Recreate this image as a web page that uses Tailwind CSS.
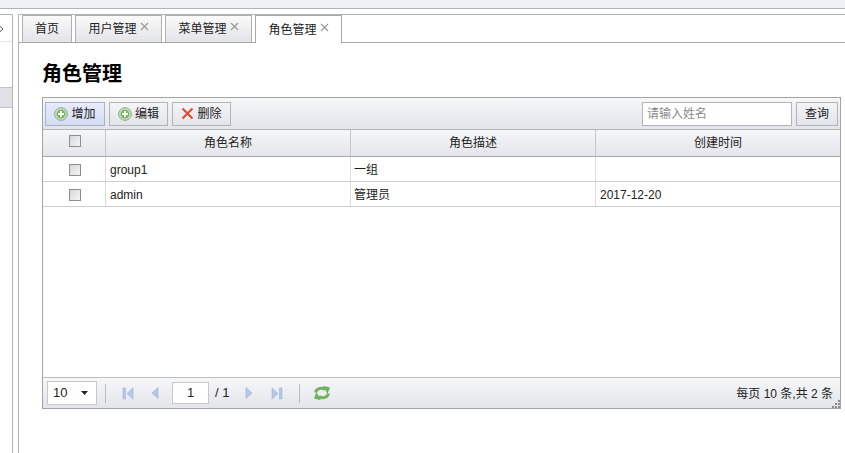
<!DOCTYPE html>
<html lang="zh-CN">
<head>
  <meta charset="UTF-8" />
  <title>角色管理</title>
  <script src="https://cdn.jsdelivr.net/npm/@tailwindcss/browser@4"></script>
</head>
<body class="bg-white overflow-hidden font-['Liberation_Sans','Noto_Sans_CJK_SC',sans-serif] text-xs text-[#222]">
<div class="w-[845px] h-[453px] flex flex-col">
  <!-- top bar -->
  <div class="h-[9px] shrink-0 bg-[#eef1f6] border-b border-[#b4b4b4]"></div>

  <div class="flex flex-1 pt-[5px] min-h-0">
    <!-- collapsed side menu -->
    <div class="w-[13px] shrink-0 border-t border-r border-[#b4b4b4] flex flex-col">
      <div class="h-[27px] flex items-center border-b border-[#e4e4e4] overflow-hidden">
        <svg width="11" height="11" viewBox="0 0 11 11" class="-ml-[7px] shrink-0"><path d="M2 2.500 6 6 2 9.500M6 2.500 10 6 6 9.500" fill="none" stroke="#555" stroke-width="1"/></svg>
      </div>
      <div class="mt-[45px] h-[21px] bg-[#dfe1e6] border-y border-[#c4c4c4]"></div>
    </div>

    <!-- main -->
    <div class="ml-[5px] flex-1 border-t border-l border-[#b4b4b4] flex flex-col min-w-0">
      <!-- tabs -->
      <div class="h-[28px] shrink-0 border-b border-[#a8a8a8] flex items-start pl-[3px] gap-[3px]">
        <div class="w-[50px] h-[27px] bg-gradient-to-b from-[#fafafa] to-[#e3e4e8] border border-b-0 border-[#b0b0b0] flex items-center justify-center">首页</div>
        <div class="w-[87px] h-[27px] bg-gradient-to-b from-[#fafafa] to-[#e3e4e8] border border-b-0 border-[#b0b0b0] flex items-center justify-center gap-[3px]"><span>用户管理</span><svg width="9" height="9" viewBox="0 0 9 9" class="-mt-[5px]"><path d="M1 1 8 8M8 1 1 8" stroke="#999" stroke-width="1.2"/></svg></div>
        <div class="w-[87px] h-[27px] bg-gradient-to-b from-[#fafafa] to-[#e3e4e8] border border-b-0 border-[#b0b0b0] flex items-center justify-center gap-[3px]"><span>菜单管理</span><svg width="9" height="9" viewBox="0 0 9 9" class="-mt-[5px]"><path d="M1 1 8 8M8 1 1 8" stroke="#999" stroke-width="1.2"/></svg></div>
        <div class="w-[87px] h-[28px] bg-white border border-b-0 border-[#a8a8a8] flex items-center justify-center gap-[3px] relative z-10"><span>角色管理</span><svg width="9" height="9" viewBox="0 0 9 9" class="-mt-[5px]"><path d="M1 1 8 8M8 1 1 8" stroke="#999" stroke-width="1.2"/></svg></div>
      </div>

      <div class="flex-1 flex flex-col pl-[23px] pr-[4px] pb-[44px] min-h-0">
        <h1 class="h-[54px] shrink-0 flex items-center text-xl font-bold text-black leading-none pt-[7px]">角色管理</h1>

        <!-- grid panel -->
        <div class="flex-1 border border-[#a3a3a3] flex flex-col relative min-h-0">
          <!-- toolbar -->
          <div class="h-[32px] shrink-0 bg-gradient-to-b from-[#f6f7f9] to-[#e3e5ea] border-b border-[#b4b4b4] flex items-center pl-[2px] pr-[2px]">
            <button class="w-[60px] h-[24px] bg-gradient-to-b from-[#e8ecfa] to-[#d3dcf3] border border-[#a9b2c8] flex items-center justify-center gap-[3px]">
              <svg width="14" height="14" viewBox="0 0 14 14"><circle cx="7" cy="7" r="6.300" fill="#d5e6cf" stroke="#8f9c8e"/><circle cx="7" cy="7" r="4.600" fill="#72bd60"/><path d="M7 4v6M4 7h6" stroke="#fff" stroke-width="1.800"/></svg><span>增加</span>
            </button>
            <button class="ml-[4px] w-[59px] h-[24px] bg-gradient-to-b from-[#f4f5f8] to-[#e2e4e9] border border-[#b4b4b4] flex items-center justify-center gap-[3px]">
              <svg width="14" height="14" viewBox="0 0 14 14"><circle cx="7" cy="7" r="6.300" fill="#d5e6cf" stroke="#8f9c8e"/><circle cx="7" cy="7" r="4.600" fill="#72bd60"/><path d="M7 4v6M4 7h6" stroke="#fff" stroke-width="1.800"/></svg><span>编辑</span>
            </button>
            <button class="ml-[4px] w-[59px] h-[24px] bg-gradient-to-b from-[#f4f5f8] to-[#e2e4e9] border border-[#b4b4b4] flex items-center justify-center gap-[3px]">
              <svg width="13" height="13" viewBox="0 0 13 13"><path d="M1.500 1.500 11.500 11.500M11.500 1.500 1.500 11.500" stroke="#e2492c" stroke-width="2"/></svg><span>删除</span>
            </button>
            <input placeholder="请输入姓名" class="ml-auto w-[150px] h-[24px] bg-white border border-[#b4b4b4] px-[4px] text-xs outline-none placeholder:text-[#8a8a8a]" />
            <button class="ml-[4px] w-[42px] h-[24px] bg-gradient-to-b from-[#f4f5f8] to-[#e2e4e9] border border-[#b4b4b4]">查询</button>
          </div>

          <!-- header -->
          <div class="h-[27px] shrink-0 grid grid-cols-[63px_245px_245px_1fr] bg-gradient-to-b from-[#f5f6f8] to-[#e4e6ea] border-b border-[#a8a8a8] text-center">
            <div class="border-r border-[#c6c6c6] flex items-center justify-center pb-[5px] pl-[2px]"><span class="w-[12px] h-[12px] border border-[#8f8f8f] bg-gradient-to-br from-[#d6d6d6] to-[#f5f5f5]"></span></div>
            <div class="border-r border-[#c6c6c6] flex items-center justify-center">角色名称</div>
            <div class="border-r border-[#c6c6c6] flex items-center justify-center">角色描述</div>
            <div class="flex items-center justify-center">创建时间</div>
          </div>

          <!-- rows -->
          <div class="h-[25px] shrink-0 grid grid-cols-[63px_245px_245px_1fr] border-b border-[#cfcfcf]">
            <div class="border-r border-[#dcdcdc] flex items-center justify-center pt-[2px] pl-[2px]"><span class="w-[12px] h-[12px] border border-[#8f8f8f] bg-gradient-to-br from-[#d6d6d6] to-[#f5f5f5]"></span></div>
            <div class="border-r border-[#dcdcdc] flex items-center pl-[4px] pt-[2px]">group1</div>
            <div class="border-r border-[#dcdcdc] flex items-center pl-[3px] pt-[2px]">一组</div>
            <div class="flex items-center pl-[4px] pt-[2px]"></div>
          </div>
          <div class="h-[25px] shrink-0 grid grid-cols-[63px_245px_245px_1fr] border-b border-[#cfcfcf]">
            <div class="border-r border-[#dcdcdc] flex items-center justify-center pt-[2px] pl-[2px]"><span class="w-[12px] h-[12px] border border-[#8f8f8f] bg-gradient-to-br from-[#d6d6d6] to-[#f5f5f5]"></span></div>
            <div class="border-r border-[#dcdcdc] flex items-center pl-[4px] pt-[2px]">admin</div>
            <div class="border-r border-[#dcdcdc] flex items-center pl-[3px] pt-[2px]">管理员</div>
            <div class="flex items-center pl-[4px] pt-[2px]">2017-12-20</div>
          </div>

          <div class="flex-1"></div>

          <!-- pager -->
          <div class="h-[31px] shrink-0 bg-gradient-to-b from-[#f6f7f9] to-[#e3e5ea] border-t border-[#bdbdbd] flex items-center pl-[4px] pr-[7px]">
            <div class="w-[50px] h-[24px] bg-white border border-[#c8c8c8] flex items-center justify-between pl-[5px] pr-[8px] text-[13px]">
              <span>10</span>
              <svg width="7" height="4" viewBox="0 0 7 4"><path d="M0 0h7L3.500 4z" fill="#222"/></svg>
            </div>
            <span class="ml-[8px] w-px h-[19px] bg-[#bcbcbc]"></span>
            <svg width="12" height="13" viewBox="0 0 12 13" class="ml-[16px]"><path d="M1 1h2.500v11H1z" fill="#b5c7ea" stroke="#9ab2de" stroke-width=".6"/><path d="M11 1v11L5 6.500z" fill="#b5c7ea" stroke="#9ab2de" stroke-width=".6"/></svg>
            <svg width="8" height="12" viewBox="0 0 8 12" class="ml-[17px]"><path d="M7 .5v11L1 6z" fill="#b5c7ea" stroke="#9ab2de" stroke-width=".6"/></svg>
            <div class="ml-[13px] w-[37px] h-[22px] bg-white border border-[#c8c8c8] flex items-center justify-center text-[13px]">1</div>
            <span class="ml-[6px] text-[13px]">/ 1</span>
            <svg width="8" height="12" viewBox="0 0 8 12" class="ml-[16px]"><path d="M1 .5v11L7 6z" fill="#b5c7ea" stroke="#9ab2de" stroke-width=".6"/></svg>
            <svg width="12" height="13" viewBox="0 0 12 13" class="ml-[18px]"><path d="M1 1v11l6-5.500z" fill="#b5c7ea" stroke="#9ab2de" stroke-width=".6"/><path d="M8.500 1H11v11H8.500z" fill="#b5c7ea" stroke="#9ab2de" stroke-width=".6"/></svg>
            <span class="ml-[16px] w-px h-[19px] bg-[#bcbcbc]"></span>
            <svg width="18" height="16" viewBox="0 0 18 16" class="ml-[13px]"><path d="M2.500 7.500C3.500 3.500 8 2 12 4.500" fill="none" stroke="#6db35c" stroke-width="3"/><path d="M10 .8 17 2.500 14.500 9z" fill="#6db35c"/><path d="M15.500 8.500C14.500 12.500 10 14 6 11.500" fill="none" stroke="#6db35c" stroke-width="3"/><path d="M8 15.200 1 13.500 3.500 7z" fill="#6db35c"/></svg>
            <span class="ml-auto pt-[1px] text-[#222]">每页 10 条,共 2 条</span>
          </div>

          <!-- resize grip -->
          <div class="absolute right-0 bottom-0 grid grid-cols-3 gap-[1px]">
            <i class="w-[2px] h-[2px]"></i><i class="w-[2px] h-[2px]"></i><i class="w-[2px] h-[2px] bg-[#8a8a8a]"></i>
            <i class="w-[2px] h-[2px]"></i><i class="w-[2px] h-[2px] bg-[#8a8a8a]"></i><i class="w-[2px] h-[2px] bg-[#8a8a8a]"></i>
            <i class="w-[2px] h-[2px] bg-[#8a8a8a]"></i><i class="w-[2px] h-[2px] bg-[#8a8a8a]"></i><i class="w-[2px] h-[2px] bg-[#8a8a8a]"></i>
          </div>
        </div>
      </div>
    </div>
  </div>
</div>
</body>
</html>
